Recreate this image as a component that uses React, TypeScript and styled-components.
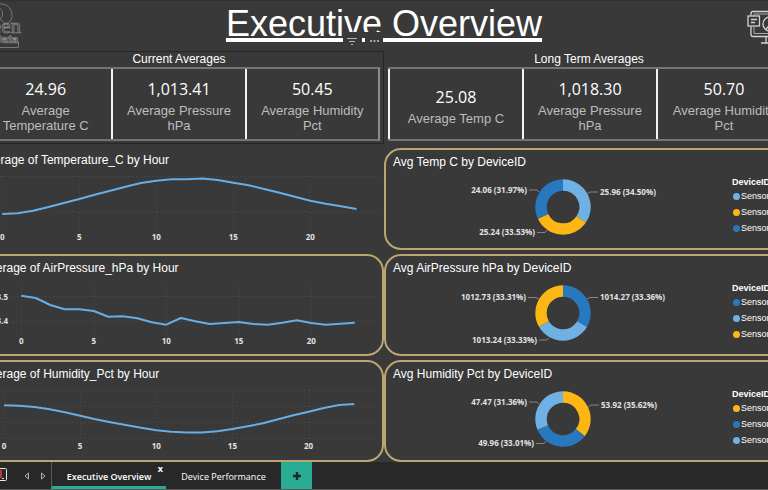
import React from "react";
import styled, { createGlobalStyle } from "styled-components";

const GlobalStyle = createGlobalStyle`
  * { box-sizing: border-box; }
  body {
    margin: 0;
    background: #393939;
    color: #fff;
    font-family: "Liberation Sans", Arial, sans-serif;
  }
  button { font: inherit; color: inherit; border: 0; padding: 0; background: none; }
`;

const UI_FONT = `"Open Sans", "Noto Sans", sans-serif`;
const SKY = "#6fb1e4";
const BLUE = "#2878bd";
const AMBER = "#fdb714";

const Page = styled.div`
  min-height: 100vh;
  overflow: hidden;
`;

/* The report canvas is wider than the window and bleeds past both sides. */
const Canvas = styled.main`
  margin: 0 -22px;
  display: flex;
  flex-direction: column;
`;

const Header = styled.header`
  display: grid;
  grid-template-columns: 1fr auto 1fr;
  height: 51px;
  border-top: 1px solid #303030;
`;

const TitleBox = styled.div`
  position: relative;
`;

const Title = styled.h1`
  margin: 0;
  font-size: 36px;
  font-weight: 400;
  line-height: 45px;
  white-space: nowrap;
  text-decoration: underline;
  text-decoration-thickness: 4px;
  text-underline-offset: 2px;
  text-decoration-skip-ink: none;
`;

const VisualTools = styled.div`
  position: absolute;
  left: 117px;
  top: 31px;
  width: 40px;
  height: 14px;
  background: #393939;
`;

const HeaderRight = styled.div`
  display: flex;
  justify-content: flex-end;
`;

const Columns = styled.div`
  display: grid;
  grid-template-columns: 1fr 1fr;
`;

const KpiGroup = styled.section<{ $outlined?: boolean }>`
  height: 93px;
  border: 1px solid ${(p) => (p.$outlined ? "#262626" : "transparent")};
  border-left-width: 0;
  border-right-width: ${(p) => (p.$outlined ? 1 : 0)}px;
  padding-left: ${(p) => (p.$outlined ? 0 : 4)}px;
  padding-right: ${(p) => (p.$outlined ? 3 : 0)}px;
`;

const KpiHeading = styled.h2`
  margin: 0;
  font-size: 12px;
  font-weight: 400;
  line-height: 14px;
  text-align: center;
  padding-bottom: 1px;
`;

const KpiFrame = styled.div<{ $closed?: boolean }>`
  display: grid;
  grid-template-columns: repeat(3, 1fr);
  height: 74px;
  border-top: 2px solid #747474;
  border-bottom: 2px solid #747474;
  border-right: ${(p) => (p.$closed ? "2px solid #8c8c8c" : "0")};
`;

const KpiCard = styled.div`
  display: flex;
  flex-direction: column;
  justify-content: center;
  border-left: 2px solid #f2f2f2;
  padding: 2px 10px 0;
  text-align: center;
`;

const KpiValue = styled.div`
  font-family: ${UI_FONT};
  font-size: 16px;
  line-height: 24px;
`;

const KpiLabel = styled.div`
  padding-top: 2px;
  font-size: 13px;
  line-height: 15px;
  color: #bdbdbd;
`;

const Charts = styled.div`
  display: grid;
  grid-template-columns: 1fr 1fr;
  row-gap: 4px;
  padding-top: 4px;
`;

const Panel = styled.section<{ $plain?: boolean }>`
  min-width: 0;
  overflow: hidden;
  padding-top: 4px;
  border: ${(p) => (p.$plain ? "0" : "2px solid #bda571")};
  border-radius: 17px;
`;

const PanelTitle = styled.h3<{ $tight?: boolean }>`
  margin: 0;
  padding-left: ${(p) => (p.$tight ? 2 : 7)}px;
  font-size: 12px;
  font-weight: 400;
  line-height: 16px;
  white-space: nowrap;
`;

const Plot = styled.svg`
  display: block;
  width: 100%;
  min-width: 0;
  font-family: ${UI_FONT};
  font-size: 8px;
  font-weight: 700;
  fill: #e2e2e2;
`;

const DonutBody = styled.div`
  display: grid;
  grid-template-columns: 1fr 56px;
`;

const Legend = styled.ul`
  list-style: none;
  margin: 0;
  padding: 6px 0 0;
  font-size: 9px;
  white-space: nowrap;
`;

const LegendTitle = styled.li`
  font-weight: 700;
  line-height: 12px;
`;

const LegendItem = styled.li`
  display: flex;
  align-items: center;
  gap: 1px;
  line-height: 16px;
`;

const Dot = styled.span<{ $color: string }>`
  width: 7px;
  height: 7px;
  flex: none;
  margin-left: 1px;
  border-radius: 50%;
  background: ${(p) => p.$color};
`;

const PageBar = styled.nav`
  display: flex;
  height: 28px;
  background: #282828;
  border-bottom: 1px solid #595959;
  padding-left: 15px;
  font-family: ${UI_FONT};
  font-size: 9px;
`;

const PhoneButton = styled.button`
  width: 14px;
`;

const Pager = styled.div`
  display: flex;
  gap: 10px;
  padding: 0 5px 0 17px;
`;

const PagerButton = styled.button`
  width: 6px;
  display: flex;
  align-items: center;
`;

const Tab = styled.div<{ $active?: boolean }>`
  position: relative;
  width: 115px;
  border-left: ${(p) => (p.$active ? "1px solid #5a5a5a" : "0")};
  border-bottom: 3px solid ${(p) => (p.$active ? "#2aac94" : "transparent")};
`;

const TabButton = styled.button<{ $active?: boolean }>`
  width: 100%;
  height: 100%;
  padding-top: 4px;
  font-weight: ${(p) => (p.$active ? 600 : 400)};
  color: #fff;
  white-space: nowrap;
`;

const TabClose = styled.button`
  position: absolute;
  top: 1px;
  right: 3px;
  font-weight: 700;
  line-height: 12px;
`;

const AddButton = styled.button`
  width: 31px;
  background: #2aac94;
  display: flex;
  align-items: center;
  justify-content: center;
`;

interface LineSpec {
  title: string;
  plain?: boolean;
  x0: number;
  step: number;
  ys: number[];
  rules: number[];
  ruleStart: number;
  ruleEnd: number;
  bottom: number;
  baseline: number;
  yLabels?: { y: number; text: string }[];
}

const lines: LineSpec[] = [
  {
    title: "Average of Temperature_C by Hour",
    plain: true,
    x0: 24.3,
    step: 15.4,
    ys: [46, 45.3, 42.7, 39, 35, 31, 26.7, 22.7, 18.7, 15, 12.7, 11.3, 11.2, 10.5, 12, 14.7, 17.3, 21, 24.7, 28.7, 32.7, 35.7, 38.3, 41],
    rules: [8.5, 43.5],
    ruleStart: 22,
    ruleEnd: 401,
    bottom: 61,
    baseline: 72,
  },
  {
    title: "Average of AirPressure_hPa by Hour",
    x0: 43.3,
    step: 14.5,
    ys: [19.7, 22, 29, 33.3, 33.3, 35, 40.7, 40.3, 42.3, 46.3, 48.7, 42, 45.3, 48, 47, 46, 48, 48.7, 46.7, 44.3, 47, 48.7, 47.7, 46.7],
    rules: [20.5, 45.5],
    ruleStart: 35,
    ruleEnd: 397,
    bottom: 59,
    baseline: 68,
    yLabels: [
      { y: 24, text: "1013.5" },
      { y: 48, text: "1013.4" },
    ],
  },
  {
    title: "Average of Humidity_Pct by Hour",
    x0: 26,
    step: 15.23,
    ys: [23.3, 23.7, 25, 27.3, 30.3, 33.7, 37.3, 40.3, 43, 45.7, 48.3, 49.7, 50.5, 50.5, 49.3, 47, 44.3, 41.3, 37.3, 33.3, 29.7, 26, 23, 22],
    rules: [8.5, 24.5, 40.5, 56.5],
    ruleStart: 22,
    ruleEnd: 395,
    bottom: 57,
    baseline: 67,
  },
];

interface Slice {
  color: string;
  share: number;
  text: string;
  x: number;
  y: number;
  anchor: "start" | "end";
  leader: string;
}

interface DonutSpec {
  title: string;
  slices: Slice[];
}

const donuts: DonutSpec[] = [
  {
    title: "Avg Temp C by DeviceID",
    slices: [
      { color: SKY, share: 34.5, text: "25.96 (34.50%)", x: 216, y: 25, anchor: "start", leader: "M203 24l3-2h8" },
      { color: AMBER, share: 33.53, text: "25.24 (33.53%)", x: 151, y: 65, anchor: "end", leader: "M163 60l-2 2.5h-8" },
      { color: BLUE, share: 31.97, text: "24.06 (31.97%)", x: 143, y: 23, anchor: "end", leader: "M155 22l-2-2h-8" },
    ],
  },
  {
    title: "Avg AirPressure hPa by DeviceID",
    slices: [
      { color: BLUE, share: 33.36, text: "1014.27 (33.36%)", x: 216, y: 24, anchor: "start", leader: "M203 23l3-1.5h8" },
      { color: SKY, share: 33.33, text: "1013.24 (33.33%)", x: 153, y: 67, anchor: "end", leader: "M165 62l-2 2h-8" },
      { color: AMBER, share: 33.31, text: "1012.73 (33.31%)", x: 142, y: 24, anchor: "end", leader: "M155 23l-3-1.5h-8" },
    ],
  },
  {
    title: "Avg Humidity Pct by DeviceID",
    slices: [
      { color: AMBER, share: 35.62, text: "53.92 (35.62%)", x: 217, y: 26, anchor: "start", leader: "M204 25l3-2h8" },
      { color: BLUE, share: 33.01, text: "49.96 (33.01%)", x: 150, y: 64, anchor: "end", leader: "M162 59l-2 2.5h-8" },
      { color: SKY, share: 31.36, text: "47.47 (31.36%)", x: 143, y: 23, anchor: "end", leader: "M155 22l-2-2h-8" },
    ],
  },
];

function LinePanel({ spec }: { spec: LineSpec }) {
  const hours = [0, 5, 10, 15, 20];
  return (
    <Panel $plain={spec.plain}>
      <PanelTitle $tight>{spec.title}</PanelTitle>
      <Plot viewBox={spec.plain ? "0 0 406 78" : "2 0 402 78"} role="img" aria-label={spec.title}>
        <g stroke="#4d4d4d" strokeWidth="1" strokeDasharray="1 3">
          {spec.rules.map((y) => (
            <line key={y} x1={spec.ruleStart} x2={spec.ruleEnd} y1={y} y2={y} />
          ))}
          {hours.map((h) => {
            const x = Math.round(spec.x0 + h * spec.step) + 0.5;
            return <line key={h} x1={x} x2={x} y1={8} y2={spec.bottom} />;
          })}
        </g>
        <polyline
          points={spec.ys.map((y, i) => `${spec.x0 + i * spec.step},${y}`).join(" ")}
          fill="none"
          stroke="#68ade3"
          strokeWidth="2"
          strokeLinejoin="round"
        />
        {hours.map((h) => (
          <text key={h} x={spec.x0 + h * spec.step} y={spec.baseline} textAnchor="middle">
            {h}
          </text>
        ))}
        {spec.yLabels?.map((l) => (
          <text key={l.text} x={30} y={l.y} textAnchor="end">
            {l.text}
          </text>
        ))}
      </Plot>
    </Panel>
  );
}

const CX = 179;
const CY = 37;

function ringPath(from: number, to: number) {
  const at = (share: number, r: number) => {
    const a = (share / 100) * Math.PI * 2;
    return `${CX + r * Math.sin(a)} ${CY - r * Math.cos(a)}`;
  };
  const outer = 27.7;
  const inner = 16.3;
  return `M${at(from, outer)}A${outer} ${outer} 0 0 1 ${at(to, outer)}L${at(to, inner)}A${inner} ${inner} 0 0 0 ${at(from, inner)}Z`;
}

function DonutPanel({ spec }: { spec: DonutSpec }) {
  let total = 0;
  return (
    <Panel>
      <PanelTitle>{spec.title}</PanelTitle>
      <DonutBody>
        <Plot viewBox="2 0 346 78" role="img" aria-label={spec.title}>
          {spec.slices.map((s) => {
            const from = total;
            total += s.share;
            return (
              <g key={s.text}>
                <path d={ringPath(from, total)} fill={s.color} />
                <path d={s.leader} fill="none" stroke="#858585" />
                <text x={s.x} y={s.y} textAnchor={s.anchor}>
                  {s.text}
                </text>
              </g>
            );
          })}
        </Plot>
        <Legend>
          <LegendTitle>DeviceID</LegendTitle>
          {spec.slices.map((s, i) => (
            <LegendItem key={s.color}>
              <Dot $color={s.color} />
              Sensor_{i + 1}
            </LegendItem>
          ))}
        </Legend>
      </DonutBody>
    </Panel>
  );
}

function Logo() {
  return (
    <svg width="46" height="50" viewBox="0 0 46 50" fill="none" stroke="#929292" strokeWidth="0.7" role="img" aria-label="Green Data">
      <path d="M16 4C27 0 34 7 34 14C34 20 30 23 25 23.500" />
      <path d="M20 7c3 0 4.500 3 4.500 6s-1.500 5-4.500 6M22 18l5 4.500" />
      <text x="43" y="32" textAnchor="end" fontFamily="Liberation Serif, serif" fontSize="21">Green</text>
      <text x="40" y="42" textAnchor="end" fontFamily="Liberation Sans, sans-serif" fontWeight="700" fontSize="11">Data</text>
      <path d="M10 46.500H40.500V41" />
    </svg>
  );
}

function MonitorIcon() {
  return (
    <svg width="44" height="50" viewBox="0 0 44 50" fill="none" stroke="#d2d2d2" strokeWidth="1.300" aria-hidden="true">
      <path d="M5 14.500v-2q0-2 2-2h32q2 0 2 2v21q0 2-2 2H7q-2 0-2-2v-8" />
      <path d="M8 14.500v-1.500h30v19.500H8V26" strokeWidth="1" stroke="#a9a9a9" />
      <rect x="2" y="15" width="11.500" height="10" />
      <path d="M5 18.500h6M5 21.500h4" />
      <circle cx="24" cy="23" r="7" />
      <path d="M24 16v7l-4 5.500M24 23l6 3M20 36v6M27 36v6M15 42h18" />
    </svg>
  );
}

function Kpis({ items }: { items: [string, string][] }) {
  return (
    <>
      {items.map(([value, label]) => (
        <KpiCard key={label}>
          <KpiValue>{value}</KpiValue>
          <KpiLabel>{label}</KpiLabel>
        </KpiCard>
      ))}
    </>
  );
}

export default function App() {
  return (
    <Page>
      <GlobalStyle />
      <Canvas>
        <Header>
          <Logo />
          <TitleBox>
            <Title>Executive Overview</Title>
            <VisualTools>
              <svg width="40" height="14" viewBox="0 0 40 14" aria-hidden="true">
                <path d="M4 6.500h10M6 9.500h6M8 12.500h2" stroke="#b5b5b5" />
                <path d="M19 6h3v4h-3z" fill="#fff" />
                <path d="M27 8h2v2h-2zM30.500 8h2v2h-2zM34 8h2v2h-2z" fill="#a5a5a5" />
              </svg>
            </VisualTools>
          </TitleBox>
          <HeaderRight>
            <MonitorIcon />
          </HeaderRight>
        </Header>

        <Columns>
          <KpiGroup $outlined>
            <KpiHeading>Current Averages</KpiHeading>
            <KpiFrame $closed>
              <Kpis
                items={[
                  ["24.96", "Average Temperature C"],
                  ["1,013.41", "Average Pressure hPa"],
                  ["50.45", "Average Humidity Pct"],
                ]}
              />
            </KpiFrame>
          </KpiGroup>
          <KpiGroup>
            <KpiHeading>Long Term Averages</KpiHeading>
            <KpiFrame>
              <Kpis
                items={[
                  ["25.08", "Average Temp C"],
                  ["1,018.30", "Average Pressure hPa"],
                  ["50.70", "Average Humidity Pct"],
                ]}
              />
            </KpiFrame>
          </KpiGroup>
        </Columns>

        <Charts>
          {lines.map((line, i) => (
            <React.Fragment key={line.title}>
              <LinePanel spec={line} />
              <DonutPanel spec={donuts[i]} />
            </React.Fragment>
          ))}
        </Charts>

        <PageBar aria-label="Report pages">
          <PhoneButton aria-label="Phone layout">
            <svg width="14" height="15" viewBox="0 0 14 15" fill="none">
              <rect x="5.500" y="1.500" width="8" height="12" rx="1" stroke="#e8e8e8" />
              <path d="M2 3h7v8H2z" fill="#b8383b" />
              <path d="M9 11.500h2" stroke="#e8e8e8" />
            </svg>
          </PhoneButton>
          <Pager>
            <PagerButton aria-label="Previous page">
              <svg width="6" height="8" viewBox="0 0 6 8" fill="none" stroke="#b5b5b5">
                <path d="M4.500 1v6L1 4z" />
              </svg>
            </PagerButton>
            <PagerButton aria-label="Next page">
              <svg width="6" height="8" viewBox="0 0 6 8" fill="none" stroke="#b5b5b5">
                <path d="M1.500 1v6L5 4z" />
              </svg>
            </PagerButton>
          </Pager>
          <Tab $active>
            <TabButton $active aria-current="page">
              Executive Overview
            </TabButton>
            <TabClose aria-label="Close page">x</TabClose>
          </Tab>
          <Tab>
            <TabButton>Device Performance</TabButton>
          </Tab>
          <AddButton aria-label="Add page">
            <svg width="10" height="10" viewBox="0 0 10 10" stroke="#1d2b28" strokeWidth="2.500">
              <path d="M5 1v8M1 5h8" />
            </svg>
          </AddButton>
        </PageBar>
      </Canvas>
    </Page>
  );
}
